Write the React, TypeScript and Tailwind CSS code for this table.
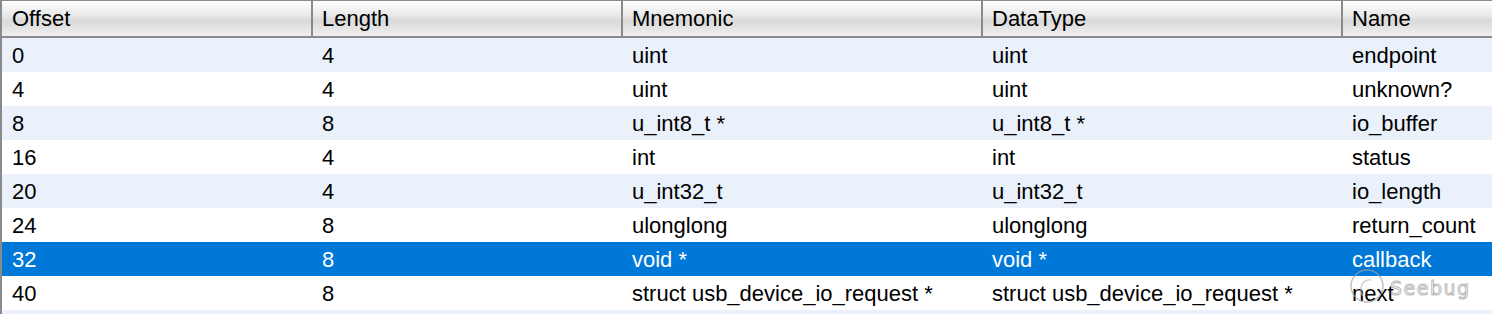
// Struct layout grid, Windows list-view style
interface IField {
    offset: string;
    length: string;
    mnemonic: string;
    dataType: string;
    name: string;
}

const FIELDS: IField[] = [
    { offset: "0", length: "4", mnemonic: "uint", dataType: "uint", name: "endpoint" },
    { offset: "4", length: "4", mnemonic: "uint", dataType: "uint", name: "unknown?" },
    { offset: "8", length: "8", mnemonic: "u_int8_t *", dataType: "u_int8_t *", name: "io_buffer" },
    { offset: "16", length: "4", mnemonic: "int", dataType: "int", name: "status" },
    { offset: "20", length: "4", mnemonic: "u_int32_t", dataType: "u_int32_t", name: "io_length" },
    { offset: "24", length: "8", mnemonic: "ulonglong", dataType: "ulonglong", name: "return_count" },
    { offset: "32", length: "8", mnemonic: "void *", dataType: "void *", name: "callback" },
    { offset: "40", length: "8", mnemonic: "struct usb_device_io_request *", dataType: "struct usb_device_io_request *", name: "next" },
];

const SELECTED = 6;

const COLS = "grid grid-cols-[311px_310px_360px_360px_1fr]";

export default function App() {
    return (
        <div className="relative w-[1492px] h-[314px] overflow-hidden bg-white font-['Liberation_Sans',sans-serif] text-[22px] text-black border-l-2 border-[#8a8a8a]">
            {/* header */}
            <div className={`${COLS} h-[38px] border-t border-b-2 border-[#8a8a8a] bg-[linear-gradient(#ffffff,#e6e6e6_45%,#d9d9d9_55%,#efefef)]`}>
                {["Offset", "Length", "Mnemonic", "DataType", "Name"].map((h, i) => (
                    <div key={h} className={`flex items-center ${i === 0 ? "pl-[10px]" : "pl-[9px]"} ${i < 4 ? "border-r-2 border-[#8a8a8a]" : ""}`}>
                        {h}
                    </div>
                ))}
            </div>

            {/* rows */}
            {FIELDS.map((f, idx) => (
                <div
                    key={f.offset}
                    className={`${COLS} h-[34px] items-center whitespace-nowrap ${idx === SELECTED ? "bg-[#0078d7] text-white" : idx % 2 === 0 ? "bg-[#eaf1fb]" : "bg-white"}`}
                >
                    <div className="pl-[10px]">{f.offset}</div>
                    <div className="pl-[9px]">{f.length}</div>
                    <div className="pl-[9px]">{f.mnemonic}</div>
                    <div className="pl-[9px]">{f.dataType}</div>
                    <div className="pl-[9px]">{f.name}</div>
                </div>
            ))}
            <div className="h-[34px] bg-[#eaf1fb]" />

            {/* watermark */}
            <div className="absolute left-[1347px] top-[268px] flex items-center opacity-70 pointer-events-none">
                <svg width="36" height="36" viewBox="0 0 36 36">
                    <circle cx="18" cy="18" r="16" fill="none" stroke="#a0a0a0" strokeWidth="1.3" />
                    <path d="M14 28 C9 21 13 11 22 12" fill="none" stroke="#b8b8b8" strokeWidth="1.3" />
                </svg>
                <span className="ml-[5px] mt-[4px] font-['DejaVu_Sans',sans-serif] text-[19px] tracking-[1.5px] leading-none text-white [-webkit-text-stroke:1px_#9c9c9c]">
                    Seebug
                </span>
            </div>
        </div>
    );
}
